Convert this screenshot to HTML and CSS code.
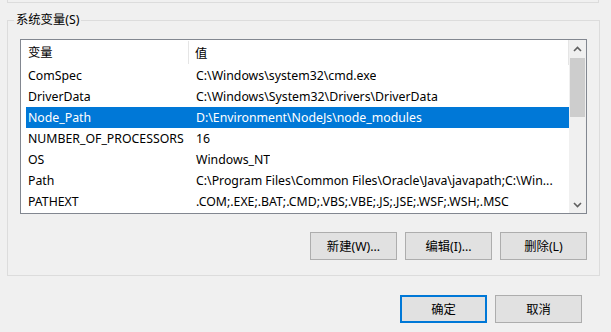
FILE: index.html
```html
<!DOCTYPE html>
<html lang="zh-CN">
<head>
<meta charset="utf-8">
<title>系统变量</title>
<link rel="stylesheet" href="styles.css">
</head>
<body>
<div class="prev-group"></div>
<fieldset class="group">
  <legend class="group-label">系统变量(S)</legend>
  <div class="listbox">
    <div class="list-main">
      <div class="list-header">
        <div class="col-name hcell">变量</div>
        <div class="col-value hcell">值</div>
      </div>
      <div class="row"><span class="col-name">ComSpec</span><span class="col-value">C:\Windows\system32\cmd.exe</span></div>
      <div class="row"><span class="col-name">DriverData</span><span class="col-value">C:\Windows\System32\Drivers\DriverData</span></div>
      <div class="row selected"><span class="col-name">Node_Path</span><span class="col-value">D:\Environment\NodeJs\node_modules</span></div>
      <div class="row"><span class="col-name">NUMBER_OF_PROCESSORS</span><span class="col-value">16</span></div>
      <div class="row"><span class="col-name">OS</span><span class="col-value">Windows_NT</span></div>
      <div class="row"><span class="col-name">Path</span><span class="col-value">C:\Program Files\Common Files\Oracle\Java\javapath;C:\Win...</span></div>
      <div class="row"><span class="col-name">PATHEXT</span><span class="col-value">.COM;.EXE;.BAT;.CMD;.VBS;.VBE;.JS;.JSE;.WSF;.WSH;.MSC</span></div>
    </div>
    <div class="scrollbar">
      <div class="sb-btn">
        <svg width="9" height="6" viewBox="0 0 9 6"><path d="M1 5 L4.5 1.5 L8 5" fill="none" stroke="#606060" stroke-width="1.6"/></svg>
      </div>
      <div class="sb-track"><div class="sb-thumb"></div></div>
      <div class="sb-btn">
        <svg width="9" height="6" viewBox="0 0 9 6"><path d="M1 1 L4.5 4.5 L8 1" fill="none" stroke="#606060" stroke-width="1.6"/></svg>
      </div>
    </div>
  </div>
  <div class="button-row">
    <button class="btn">新建(W)...</button>
    <button class="btn">编辑(I)...</button>
    <button class="btn">删除(L)</button>
  </div>
</fieldset>
<div class="dialog-buttons">
  <button class="btn default">确定</button>
  <button class="btn">取消</button>
</div>
</body>
</html>
```
FILE: styles.css
```css
html, body {
  margin: 0;
  padding: 0;
}
body {
  width: 611px;
  height: 332px;
  overflow: hidden;
  background: #f0f0f0;
  font-family: "Noto Sans", "Noto Sans CJK SC", sans-serif;
  font-size: 12.3px;
  color: #000;
}
.prev-group {
  margin-left: 7px;
  width: 590px;
  height: 2px;
  border: 1px solid #dcdcdc;
  border-top: none;
}
.group {
  margin: 9px 0 0 7px;
  width: 592px;
  box-sizing: border-box;
  border: 1px solid #dcdcdc;
  padding: 11px 12px 15px 12px;
  height: 264px;
}
.group-label {
  padding: 0 2px;
  margin-left: -6px;
  line-height: 16px;
}
.listbox {
  box-sizing: border-box;
  width: 567px;
  height: 175px;
  border: 1px solid #828790;
  background: #fff;
  display: flex;
  overflow: hidden;
}
.list-main {
  flex: 1;
  min-width: 0;
  overflow: hidden;
}
.list-header {
  display: flex;
  height: 25px;
  align-items: center;
  border-right: 1px solid #e5e5e5;
  box-sizing: border-box;
}
.col-name {
  flex: none;
  white-space: nowrap;
}
.col-value {
  white-space: nowrap;
}
.hcell.col-name {
  width: 168px;
  padding-left: 7px;
  height: 23px;
  line-height: 23px;
  border-right: 1px solid #e5e5e5;
  box-sizing: border-box;
}
.hcell.col-value {
  padding-left: 6px;
}
.row {
  display: flex;
  height: 21px;
  line-height: 21px;
  margin-left: 5px;
  overflow: hidden;
}
.row .col-name {
  width: 168px;
  padding-left: 2px;
  box-sizing: border-box;
  overflow: hidden;
}
.row .col-value {
  padding-left: 2px;
  overflow: hidden;
  text-overflow: clip;
}
.row.selected {
  background: #0078d7;
  color: #fff;
}
.scrollbar {
  width: 17px;
  flex: none;
  background: #f0f0f0;
  display: flex;
  flex-direction: column;
}
.sb-btn {
  height: 17px;
  display: flex;
  align-items: center;
  justify-content: center;
  flex: none;
}
.sb-track {
  flex: 1;
  padding: 1px 1px 0 1px;
}
.sb-thumb {
  height: 59px;
  background: #cdcdcd;
}
.button-row {
  display: flex;
  justify-content: flex-end;
  gap: 8px;
  margin-top: 18px;
}
.btn {
  width: 87px;
  height: 28px;
  box-sizing: border-box;
  background: #e1e1e1;
  border: 1px solid #adadad;
  font-family: inherit;
  font-size: 12.3px;
  color: #000;
  padding: 0;
  margin: 0;
  border-radius: 0;
}
.btn.default {
  border: 2px solid #0078d7;
}
.dialog-buttons {
  display: flex;
  justify-content: flex-end;
  gap: 8px;
  margin: 19px 29px 0 0;
}
```
